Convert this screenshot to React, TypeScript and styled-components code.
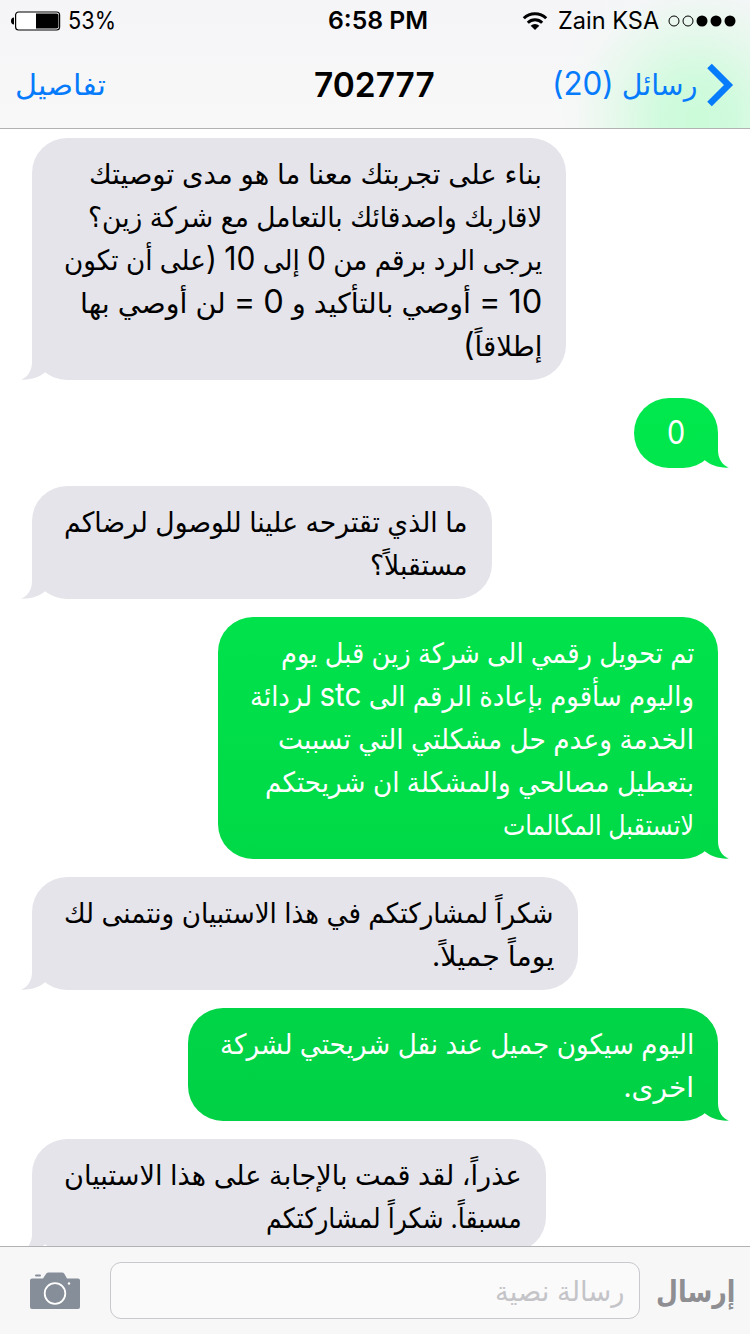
import React, { useLayoutEffect, useRef, useState } from "react";
import styled, { createGlobalStyle, css } from "styled-components";

const GlobalStyle = createGlobalStyle`
  * { box-sizing: border-box; }
  body { margin: 0; background: #fff; }
`;

const Screen = styled.div`
  display: flex;
  flex-direction: column;
  width: 750px;
  height: 1334px;
  overflow: hidden;
  background: #fff;
  font-family: "Inter", "DejaVu Sans", sans-serif;
  color: #000;
`;

const Header = styled.header`
  flex: none;
  height: 129px;
  border-bottom: 1px solid #b0b2b3;
  background:
    radial-gradient(ellipse 150px 155px at 698px 118px, #cbfbd9 0%, rgba(205, 251, 219, 0.92) 25%, rgba(222, 249, 230, 0.7) 55%, rgba(240, 248, 243, 0.3) 82%, rgba(247, 247, 248, 0) 100%),
    linear-gradient(#f5f5f8, #f8f8f8);
`;

const StatusBar = styled.div`
  display: grid;
  grid-template-columns: 1fr 99px 1fr;
  align-items: center;
  height: 41px;
  padding: 0 14px 0 11px;
`;

const StatusGroup = styled.div<{ $end?: boolean }>`
  display: flex;
  align-items: center;
  justify-content: ${(p) => (p.$end ? "flex-end" : "flex-start")};
`;

const Clock = styled.div`
  margin-left: 4px;
  margin-right: -4px;
`;

const BatteryIcon = styled.svg`
  width: 50px;
  height: 20px;
  margin-right: 7px;
`;

const WifiIcon = styled.svg`
  width: 26px;
  height: 20px;
  margin-right: 10px;
`;

const SignalDots = styled.svg`
  width: 68px;
  height: 12px;
  margin-left: 9px;
`;

const NavBar = styled.nav`
  display: grid;
  grid-template-columns: 1fr auto 1fr;
  align-items: center;
  height: 87px;
  padding: 0 16px 0 15px;
`;

const NavLink = styled.div<{ $end?: boolean }>`
  display: flex;
  align-items: center;
  justify-content: ${(p) => (p.$end ? "flex-end" : "flex-start")};
  color: #067bfb;
`;

const BackChevron = styled.svg`
  width: 27px;
  height: 44px;
  margin-left: 10px;
`;

const Thread = styled.main`
  flex: 1;
  min-height: 0;
  display: flex;
  flex-direction: column;
  gap: 18px;
  padding: 9px 32px 0;
  overflow: hidden;
`;

const Bubble = styled.div<{ $sent?: boolean; $from?: string; $to?: string; $short?: boolean }>`
  position: relative;
  flex: none;
  direction: rtl;
  display: flex;
  flex-direction: column;
  align-items: flex-start;
  align-self: ${(p) => (p.$sent ? "flex-end" : "flex-start")};
  padding: ${(p) => (p.$short ? "15px 33px 12px" : "15px 24px 12px 32px")};
  border-radius: 35px;
  color: ${(p) => (p.$sent ? "#fff" : "#000")};
  background: ${(p) =>
    p.$sent ? `linear-gradient(${p.$from}, ${p.$to})` : "#e5e4ea"};
`;

const Tail = styled.svg<{ $sent?: boolean }>`
  position: absolute;
  bottom: 0;
  width: 30px;
  height: 35px;
  ${(p) =>
    p.$sent
      ? css`
          right: -11px;
          transform: scaleX(-1);
        `
      : css`
          left: -11px;
        `}
`;

const Fit = styled.div<{ $w: number; $h: number; $size: number; $weight?: number; $rtl?: boolean }>`
  width: ${(p) => p.$w}px;
  height: ${(p) => p.$h}px;
  line-height: ${(p) => p.$h}px;
  font-size: ${(p) => p.$size}px;
  font-weight: ${(p) => p.$weight ?? 400};
  direction: ${(p) => (p.$rtl ? "rtl" : "ltr")};
  white-space: nowrap;
`;

const FitInner = styled.span<{ $rtl?: boolean }>`
  display: inline-block;
  vertical-align: top;
  transform-origin: ${(p) => (p.$rtl ? "right" : "left")} center;
`;

const Latin = styled.span`
  font-size: 32px;
  line-height: 1;
`;

const Composer = styled.footer`
  flex: none;
  display: flex;
  align-items: center;
  height: 88px;
  padding: 0 15px 0 30px;
  border-top: 1px solid #b2b2b5;
  background: #f7f7f7;
`;

const CameraIcon = styled.svg`
  width: 50px;
  height: 38px;
  margin-right: 30px;
`;

const Field = styled.div`
  display: flex;
  align-items: center;
  justify-content: flex-end;
  width: 530px;
  height: 57px;
  margin-right: 16px;
  padding: 2px 15px 0 0;
  border: 1.5px solid #c8c8cd;
  border-radius: 11px;
  background: #fafafa;
  color: #c4c4c8;
`;

const SendLabel = styled.div`
  color: #8e8e93;
`;

type FitTextProps = {
  text: string;
  w: number;
  h: number;
  size: number;
  weight?: number;
  rtl?: boolean;
};

/* Sets one line of text to an exact measure. */
function FitText({ text, w, h, size, weight, rtl }: FitTextProps) {
  const ref = useRef<HTMLSpanElement>(null);
  const [scale, setScale] = useState(1);
  useLayoutEffect(() => {
    if (ref.current) setScale(w / ref.current.offsetWidth);
  }, [text, w, size]);
  const parts = rtl ? text.split(/([0-9]+|[a-z]+|[()=])/) : [text];
  return (
    <Fit $w={w} $h={h} $size={size} $weight={weight} $rtl={rtl}>
      <FitInner ref={ref} $rtl={rtl} style={{ transform: `scaleX(${scale})` }}>
        {parts.map((p, i) => (i % 2 ? <Latin key={i}>{p}</Latin> : p))}
      </FitInner>
    </Fit>
  );
}

type Message = {
  sent?: boolean;
  short?: boolean;
  from?: string;
  to?: string;
  lines: [string, number][];
};

const messages: Message[] = [
  {
    lines: [
      ["بناء على تجربتك معنا ما هو مدى توصيتك", 453],
      ["لاقاربك واصدقائك بالتعامل مع شركة زين؟", 454],
      ["يرجى الرد برقم من 0 إلى 10 (على أن تكون", 478],
      ["10 = أوصي بالتأكيد و 0 = لن أوصي بها", 462],
      ["إطلاقاً)", 79],
    ],
  },
  { sent: true, short: true, from: "#00e84d", to: "#00e64c", lines: [["0", 18]] },
  {
    lines: [
      ["ما الذي تقترحه علينا للوصول لرضاكم", 404],
      ["مستقبلاً؟", 98],
    ],
  },
  {
    sent: true,
    from: "#00e24b",
    to: "#00d947",
    lines: [
      ["تم تحويل رقمي الى شركة زين قبل يوم", 413],
      ["واليوم سأقوم بإعادة الرقم الى stc لردائة", 444],
      ["الخدمة وعدم حل مشكلتي التي تسببت", 416],
      ["بتعطيل مصالحي والمشكلة ان شريحتكم", 429],
      ["لاتستقبل المكالمات", 191],
    ],
  },
  {
    lines: [
      ["شكراً لمشاركتكم في هذا الاستبيان ونتمنى لك", 490],
      ["يوماً جميلاً.", 122],
    ],
  },
  {
    sent: true,
    from: "#00d547",
    to: "#00d145",
    lines: [
      ["اليوم سيكون جميل عند نقل شريحتي لشركة", 474],
      ["اخرى.", 71],
    ],
  },
  {
    lines: [
      ["عذراً، لقد قمت بالإجابة على هذا الاستبيان", 458],
      ["مسبقاً. شكراً لمشاركتكم", 256],
    ],
  },
];

export default function App() {
  return (
    <>
      <GlobalStyle />
      <Screen>
        <Header>
          <StatusBar>
            <StatusGroup>
              <BatteryIcon viewBox="0 0 50 20">
                <path d="M3 6.500v7C1 13.500 0 12 0 10s1-3.500 3-3.500z" fill="#000" />
                <rect x="4.600" y="1" width="44" height="18" rx="3" fill="#fff" stroke="#000" strokeWidth="1.200" />
                <path d="M25 2.500h20.500a2 2 0 0 1 2 2v11a2 2 0 0 1-2 2H25z" fill="#000" />
              </BatteryIcon>
              <FitText text="53%" w={48} h={40} size={24} />
            </StatusGroup>
            <Clock>
              <FitText text="6:58 PM" w={100} h={40} size={24} weight={600} />
            </Clock>
            <StatusGroup $end>
              <WifiIcon viewBox="0 0 26 20" fill="none" stroke="#000" strokeWidth="3">
                <path d="M1.800 7.200a16 16 0 0 1 22.400 0" />
                <path d="M5.800 11.700a10.300 10.300 0 0 1 14.400 0" />
                <path d="M13 19l-4.300-4.200a6.200 6.200 0 0 1 8.600 0z" fill="#000" stroke="none" />
              </WifiIcon>
              <FitText text="Zain KSA" w={101} h={40} size={24} />
              <SignalDots viewBox="0 0 68 12">
                {[6, 20, 34, 48, 62].map((x, i) => (
                  <circle
                    key={x}
                    cx={x}
                    cy="6"
                    r={i < 2 ? 5 : 5.5}
                    fill={i < 2 ? "none" : "#000"}
                    stroke={i < 2 ? "#000" : "none"}
                  />
                ))}
              </SignalDots>
            </StatusGroup>
          </StatusBar>
          <NavBar>
            <NavLink>
              <FitText text="تفاصيل" w={91} h={44} size={29} rtl />
            </NavLink>
            <FitText text="702777" w={121} h={44} size={34} weight={600} />
            <NavLink $end>
              <FitText text="رسائل (20)" w={145} h={44} size={29} rtl />
              <BackChevron viewBox="0 0 27 44" fill="none" stroke="#067bfb" strokeWidth="6.500">
                <path d="M2.500 3L21.500 22 2.500 41" />
              </BackChevron>
            </NavLink>
          </NavBar>
        </Header>
        <Thread>
          {messages.map((m, i) => (
            <Bubble key={i} $sent={m.sent} $short={m.short} $from={m.from} $to={m.to}>
              {m.lines.map(([text, w]) => (
                <FitText key={text} text={text} w={w} h={43} size={28} rtl />
              ))}
              <Tail viewBox="0 0 30 35" $sent={m.sent}>
                <path
                  d="M11 0V17C11 25.500 7 32 0 34.600C10 35.300 19 31.500 24 27.500L27 20V0Z"
                  fill={m.sent ? m.to : "#e5e4ea"}
                />
              </Tail>
            </Bubble>
          ))}
        </Thread>
        <Composer>
          <CameraIcon viewBox="0 0 50 38">
            <path
              d="M2 6.500h11l3.300-5A3 3 0 0 1 18.500 0.500h13.500a3 3 0 0 1 2.300 1.200l2.700 4.800H48a2 2 0 0 1 2 2V35a2 2 0 0 1-2 2H2a2 2 0 0 1-2-2V8.500a2 2 0 0 1 2-2z"
              fill="#868e99"
            />
            <rect x="5" y="2.500" width="6" height="2" rx="1" fill="#868e99" />
            <circle cx="25" cy="21.500" r="10.300" fill="none" stroke="#fff" strokeWidth="1.800" />
            <circle cx="39" cy="11.500" r="1.200" fill="#fff" />
          </CameraIcon>
          <Field>
            <FitText text="رسالة نصية" w={129} h={43} size={28} rtl />
          </Field>
          <SendLabel>
            <FitText text="إرسال" w={79} h={44} size={30} weight={700} rtl />
          </SendLabel>
        </Composer>
      </Screen>
    </>
  );
}
